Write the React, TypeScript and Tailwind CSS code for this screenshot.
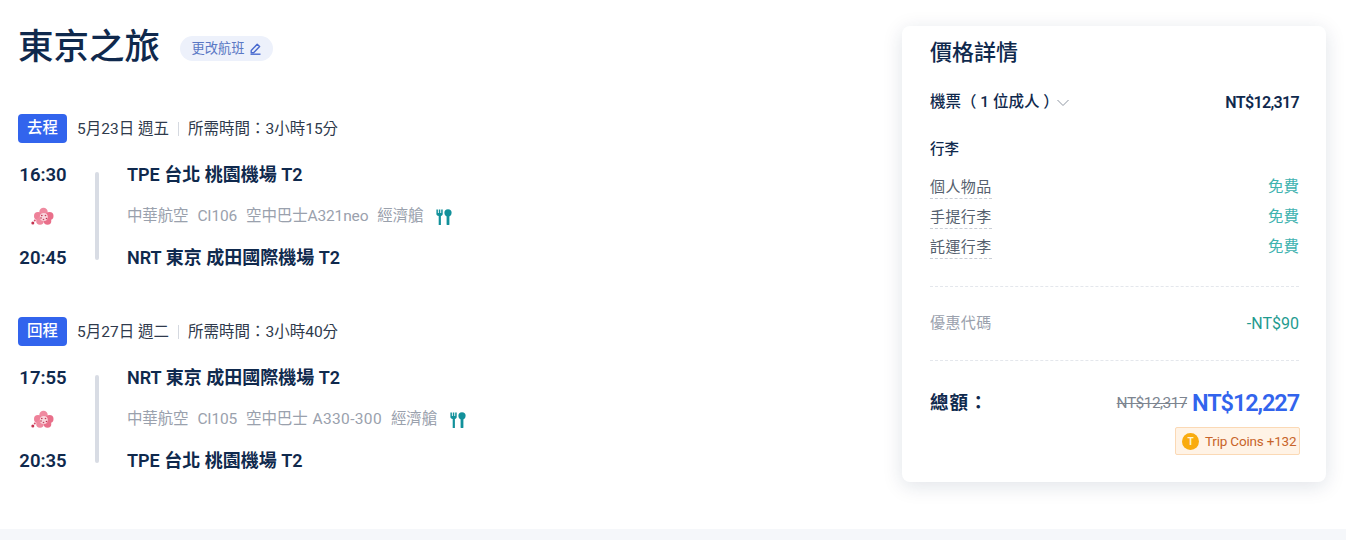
import React from "react";

const FONT = "font-['Roboto','Noto_Sans_CJK_TC',sans-serif]";

const Pencil = () => (
  <svg width="13" height="13" viewBox="0 0 13 13" fill="none" stroke="#4a6bd0" strokeWidth="1.4">
    <path d="M2.2 8.6 8.2 2.2l2.4 2.3-6 6.3H2.2z" strokeLinejoin="round" />
    <path d="M1.5 12.2h10" />
  </svg>
);

const Meal = () => (
  <svg width="16" height="16" viewBox="0 0 16 16" fill="#12919b">
    <path d="M0.4 0.5h1.5v3.6h.9V0.5h1.5v3.6h.9V0.5h1.5v4.6c0 1-.7 1.8-1.8 2V16H2.7V7.1C1.2 6.9 0.4 6 0.4 5.1z" />
    <circle cx="12" cy="3.8" r="3.6" />
    <rect x="10.6" y="5" width="2.8" height="11" rx="0.4" />
  </svg>
);

const Plum = () => (
  <svg width="24" height="20" viewBox="0 0 24 20">
    <circle cx="12.5" cy="5" r="4.2" fill="#ef8aa0" />
    <circle cx="7" cy="9" r="4" fill="#ee8199" />
    <circle cx="18.5" cy="9" r="4" fill="#e96f8a" />
    <circle cx="9" cy="14" r="3.8" fill="#ef8aa0" />
    <circle cx="16.5" cy="14" r="3.8" fill="#e96f8a" />
    <circle cx="12.8" cy="10" r="4" fill="#f9d5dc" />
    <circle cx="10.8" cy="8.5" r="0.8" fill="#b8324f" />
    <circle cx="14.5" cy="8.5" r="0.8" fill="#c4405c" />
    <circle cx="15.5" cy="11.5" r="0.8" fill="#b8324f" />
    <circle cx="12.5" cy="12.5" r="0.8" fill="#c4405c" />
    <circle cx="10" cy="11" r="0.8" fill="#b8324f" />
    <circle cx="1.8" cy="16" r="1.5" fill="#c4314f" />
    <circle cx="3.8" cy="13.5" r="1" fill="#d8506c" />
  </svg>
);

function Chevron() {
  return (
    <svg width="14" height="8" viewBox="0 0 14 8" fill="none" stroke="#8f97a3" strokeWidth="1">
      <path d="M1.5 1 7 6.5 12.5 1" />
    </svg>
  );
}

type LegProps = {
  tag: string;
  date: string;
  duration: string;
  depTime: string;
  depPort: string;
  arrTime: string;
  arrPort: string;
  flightNo: string;
  plane: React.ReactNode;
};

function Leg({ tag, date, duration, depTime, depPort, arrTime, arrPort, flightNo, plane }: LegProps) {
  return (
    <div>
      <div className="flex h-[29px] items-center">
        <span className="flex h-[29px] w-[49px] items-center justify-center rounded-[4px] bg-[#3264ed] text-[15.5px] font-medium text-white">
          {tag}
        </span>
        <span className="ml-[10px] pt-[2px] text-[15.5px] text-[#2f3a4c]">{date}</span>
        <span className="mx-[9px] h-[14px] w-px bg-[#d5d9e0]" />
        <span className="pt-[2px] text-[15.5px] text-[#2f3a4c]">{duration}</span>
      </div>
      <div className="mt-[17px] flex">
        <div className="flex w-[50px] flex-col items-center">
          <span className="h-[28px] text-[18.5px] leading-[30px] font-semibold text-[#0f294d]">{depTime}</span>
          <div className="flex h-[55px] items-center pt-[2px]">
            <Plum />
          </div>
          <span className="h-[28px] text-[18.5px] leading-[30px] font-semibold text-[#0f294d]">{arrTime}</span>
        </div>
        <div className="mt-[12px] ml-[27px] h-[88px] w-[4px] rounded-full bg-[#d8dce4]" />
        <div className="ml-[28px] flex flex-col">
          <span className="h-[28px] text-[18px] leading-[30px] font-semibold text-[#0f294d]">{depPort}</span>
          <div className="flex h-[55px] items-center pt-[2px] text-[15.5px] tracking-[-0.15px] text-[#9aa1ad]">
            <span>中華航空</span>
            <span className="ml-[9px]">{flightNo}</span>
            <span className="ml-[9px]">{plane}</span>
            <span className="ml-[9px]">經濟艙</span>
            <span className="ml-[13px]">
              <Meal />
            </span>
          </div>
          <span className="h-[28px] text-[18px] leading-[30px] font-semibold text-[#0f294d]">{arrPort}</span>
        </div>
      </div>
    </div>
  );
}

function BaggageRow({ label }: { label: string }) {
  return (
    <div className="flex h-[30px] items-center justify-between">
      <span className="border-b border-dashed border-[#c9ced6] text-[15px] leading-[21px] tracking-[0.4px] text-[#555f6e]">
        {label}
      </span>
      <span className="text-[15.5px] text-[#3fb3b0]">免費</span>
    </div>
  );
}

export default function App() {
  return (
    <div className={`${FONT} flex h-[540px] w-[1346px] flex-col overflow-hidden bg-white`}>
      <div className="flex h-[529px] justify-between">
        <div className="pt-[22px] pl-[18px]">
          <div className="flex h-[50px] items-center">
            <h1 className="text-[35.5px] leading-[50px] font-medium text-[#0f294d]">東京之旅</h1>
            <button className="mt-[3px] ml-[20px] flex h-[25px] w-[93px] items-center justify-center gap-[4px] rounded-full bg-[#edf1fb] text-[13.25px] text-[#5a78c4]">
              更改航班
              <Pencil />
            </button>
          </div>
          <div className="mt-[42px] flex flex-col gap-[46px]">
            <Leg
              tag="去程"
              date="5月23日 週五"
              duration="所需時間：3小時15分"
              depTime="16:30"
              depPort="TPE 台北 桃園機場 T2"
              arrTime="20:45"
              arrPort="NRT 東京 成田國際機場 T2"
              flightNo="CI106"
              plane="空中巴士A321neo"
            />
            <Leg
              tag="回程"
              date="5月27日 週二"
              duration="所需時間：3小時40分"
              depTime="17:55"
              depPort="NRT 東京 成田國際機場 T2"
              arrTime="20:35"
              arrPort="TPE 台北 桃園機場 T2"
              flightNo="CI105"
              plane={
                <>
                  空中巴士<span className="ml-[5px] tracking-[0.35px]">A330-300</span>
                </>
              }
            />
          </div>
        </div>

        <div className="mt-[26px] mr-[20px] h-[456px] w-[424px] rounded-[8px] bg-white pr-[27px] pl-[28px] shadow-[0_4px_20px_rgba(15,41,77,0.13)]">
          <h2 className="mt-[9px] h-[36px] text-[22px] leading-[36px] font-medium text-[#0f294d]">價格詳情</h2>
          <div className="mt-[18px] flex h-[28px] items-center justify-between">
            <div className="flex items-center">
              <span className="-mr-[3px] text-[15.5px] font-medium text-[#0f294d]">機票（ 1 位成人 ）</span>
              <Chevron />
            </div>
            <span className="text-[16px] font-semibold tracking-[-0.65px] text-[#0f294d]">NT$12,317</span>
          </div>
          <div className="mt-[21px] h-[24px] text-[14.5px] leading-[24px] font-medium text-[#0f294d]">行李</div>
          <div className="mt-[11px] flex flex-col">
            <BaggageRow label="個人物品" />
            <BaggageRow label="手提行李" />
            <BaggageRow label="託運行李" />
          </div>
          <div className="mt-[23px] border-t border-dashed border-[#e4e7ec]" />
          <div className="mt-[23px] flex h-[26px] items-center justify-between">
            <span className="text-[15px] tracking-[0.4px] text-[#9aa1ad]">優惠代碼</span>
            <span className="pt-[2px] text-[16px] text-[#1f9b90]">-NT$90</span>
          </div>
          <div className="mt-[24px] border-t border-dashed border-[#e4e7ec]" />
          <div className="mt-[28px] flex h-[30px] items-center justify-between">
            <span className="text-[18.5px] font-semibold tracking-[1px] text-[#0f294d]">總額：</span>
            <div className="flex items-center gap-[5px]">
              <span className="text-[15.5px] tracking-[-0.55px] text-[#7d8590] line-through">NT$12,317</span>
              <span className="text-[23.5px] font-semibold tracking-[-1.1px] text-[#3264ed]">NT$12,227</span>
            </div>
          </div>
          <div className="mt-[8px] -mr-[1px] flex justify-end">
            <div className="flex h-[28px] w-[125px] items-center gap-[6px] rounded-[2px] border border-[#fbd9b5] bg-[#fff3e6] pl-[6px]">
              <span className="flex h-[17px] w-[17px] items-center justify-center rounded-full bg-[#f9ab0e] text-[10px] font-bold text-[#fff3d0]">
                T
              </span>
              <span className="text-[13.5px] tracking-[-0.2px] whitespace-nowrap text-[#c8642a]">Trip Coins +132</span>
            </div>
          </div>
        </div>
      </div>
      <div className="h-[11px] bg-[#f5f7fa]" />
    </div>
  );
}
